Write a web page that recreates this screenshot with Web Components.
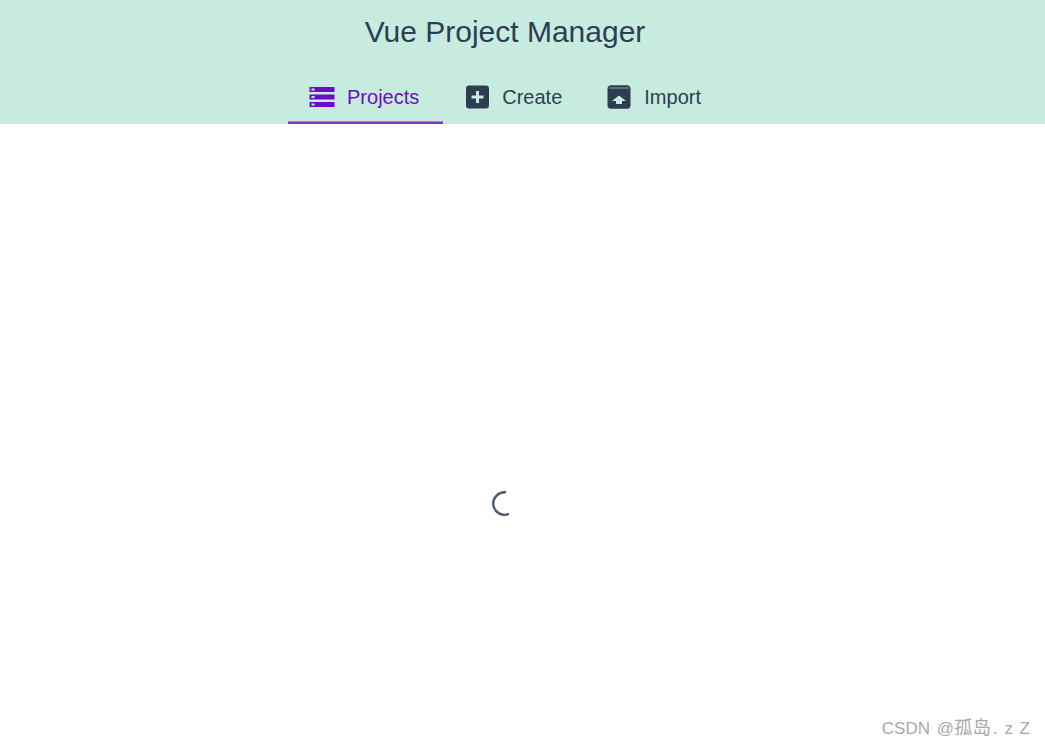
<!DOCTYPE html>
<html>
<head>
<meta charset="utf-8">
<title>Vue Project Manager</title>
<style>
  html, body { margin: 0; height: 100%; background: #fff; overflow: hidden; }
  body { font-family: "Liberation Sans", Arial, sans-serif; }
</style>
</head>
<body>
<project-page>
  <top-header title-text="Vue Project Manager">
    <nav-tab label="Projects" icon="list" active></nav-tab>
    <nav-tab label="Create" icon="plus"></nav-tab>
    <nav-tab label="Import" icon="unarchive" style="--tab-gap: 11px; --tab-end: 25px"></nav-tab>
  </top-header>
  <loading-spinner></loading-spinner>
  <water-mark>CSDN @<span style="font-size:18.5px;margin-right:2px">孤岛</span>. z Z</water-mark>
</project-page>

<script>
// icons for the tabs, all in a 26x24 box
const ICONS = {
  list: `<svg width="26" height="24" viewBox="0 0 26 24">
    <path fill="currentColor" fill-rule="evenodd" d="M0.500 2h25v5h-25zM2.500 3.500v2h3v-2zM0.500 9.500h25v5h-25zM2.500 11v2h3v-2zM0.500 17h25v5h-25zM2.500 18.500v2h3v-2z"/>
  </svg>`,
  plus: `<svg width="26" height="24" viewBox="0 0 26 24">
    <rect x="2" y="0.500" width="23" height="23" rx="3" fill="currentColor"/>
    <path fill="#c8ebdf" d="M12 6h3v4.500h4.500v3H15V18h-3v-4.500H7.500v-3H12z"/>
  </svg>`,
  unarchive: `<svg width="26" height="24" viewBox="0 0 26 24">
    <rect x="0.500" y="0.200" width="23" height="23.500" rx="3.500" fill="currentColor"/>
    <rect x="2" y="2.500" width="20" height="1" fill="#c8ebdf" opacity="0.6"/>
    <path fill="#c8ebdf" d="M12 10.500l7 5.500h-4v3H9v-3H5z"/>
  </svg>`
};

class ProjectPage extends HTMLElement {
  constructor() {
    super();
    this.attachShadow({ mode: 'open' });
    this.shadowRoot.innerHTML = `
      <style>
        :host { display: flex; flex-direction: column; height: 100vh; color: #2c3e50; }
      </style>
      <slot></slot>
    `;
  }
}

class TopHeader extends HTMLElement {
  constructor() {
    super();
    this.attachShadow({ mode: 'open' });
    this.shadowRoot.innerHTML = `
      <style>
        :host { display: block; flex: none; height: 124px; background: #c8ebdf; }
        .inner { width: 1010px; height: 100%; display: flex; flex-direction: column; align-items: center; }
        h1 { margin: 0; padding-top: 14px; height: 56px; font-size: 30px; line-height: 36px; font-weight: 400; box-sizing: border-box; }
        .tabs { margin: 14px 0 0 4px; display: flex; height: 54px; }
      </style>
      <div class="inner">
        <h1>${this.getAttribute('title-text')}</h1>
        <div class="tabs"><slot></slot></div>
      </div>
    `;
  }
}

class NavTab extends HTMLElement {
  constructor() {
    super();
    this.attachShadow({ mode: 'open' });
    this.shadowRoot.innerHTML = `
      <style>
        :host { display: flex; align-items: center; gap: var(--tab-gap, 12px); padding: 2px var(--tab-end, 24px) 0 21px; height: 50px; font-size: 20px; cursor: pointer; border-bottom: 2px solid transparent; }
        :host([active]) {
          color: #6a0dc4;
          border-bottom-color: #7a35c5;
          background: linear-gradient(#a585d8, #a585d8) bottom / 100% 1px no-repeat;
        }
        .icon { display: flex; }
      </style>
      <span class="icon">${ICONS[this.getAttribute('icon')]}</span>
      <span class="label">${this.getAttribute('label')}</span>
    `;
  }
}

class LoadingSpinner extends HTMLElement {
  constructor() {
    super();
    this.attachShadow({ mode: 'open' });
    this.shadowRoot.innerHTML = `
      <style>
        :host { flex: 1; display: flex; width: 1004px; align-items: center; justify-content: center; padding-top: 134px; box-sizing: border-box; }
        svg { display: block; }
      </style>
      <svg width="30" height="30" viewBox="0 0 30 30">
        <path d="M19 4.300A11.300 11.300 0 1 0 22 25.900" fill="none" stroke="#4a5b6c" stroke-width="2.400"/>
      </svg>
    `;
  }
}

class WaterMark extends HTMLElement {
  constructor() {
    super();
    this.attachShadow({ mode: 'open' });
    this.shadowRoot.innerHTML = `
      <style>
        :host { position: absolute; right: 15px; bottom: 8px; color: #a8a8a8; font: 17px/22px "Liberation Sans", "Noto Sans CJK SC", sans-serif; word-spacing: 2px; }
      </style>
      <slot></slot>
    `;
  }
}

customElements.define('project-page', ProjectPage);
customElements.define('top-header', TopHeader);
customElements.define('nav-tab', NavTab);
customElements.define('loading-spinner', LoadingSpinner);
customElements.define('water-mark', WaterMark);
</script>
</body>
</html>
